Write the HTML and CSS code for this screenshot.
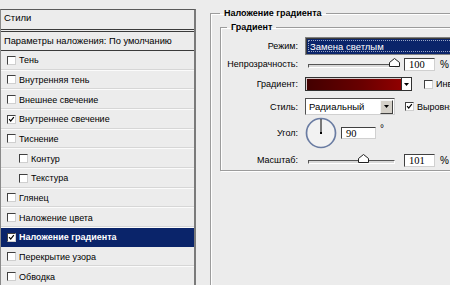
FILE: index.html
```html
<!DOCTYPE html>
<html lang="ru">
  <head>
    <meta charset="UTF-8" />
    <title>Стиль слоя</title>
    <link rel="stylesheet" href="styles.css">
  </head>
  <body>
    <div class="styles-panel">
      <div class="panel-head">Стили</div>
      <div class="panel-defaults">Параметры наложения: По умолчанию</div>
      <ul class="effects">
        <li><span class="check"></span>Тень</li>
        <li><span class="check"></span>Внутренняя тень</li>
        <li><span class="check"></span>Внешнее свечение</li>
        <li><span class="check checked"><svg viewBox="0 0 9 9"><polyline points="1.5,4 3.5,6.5 7.5,1.5" /></svg></span>Внутреннее свечение</li>
        <li><span class="check"></span>Тиснение</li>
        <li class="sub"><span class="check"></span>Контур</li>
        <li class="sub"><span class="check"></span>Текстура</li>
        <li><span class="check"></span>Глянец</li>
        <li><span class="check"></span>Наложение цвета</li>
        <li class="active"><span class="check checked"><svg viewBox="0 0 9 9"><polyline points="1.5,4 3.5,6.5 7.5,1.5" /></svg></span>Наложение градиента</li>
        <li><span class="check"></span>Перекрытие узора</li>
        <li><span class="check"></span>Обводка</li>
      </ul>
    </div>

    <div class="options">
      <fieldset class="group outer">
        <legend>Наложение градиента</legend>
        <fieldset class="group inner">
          <legend>Градиент</legend>

          <div class="row row-mode">
            <span class="row-label">Режим:</span>
            <div class="mode-box"><span>Замена светлым</span></div>
          </div>

          <div class="row row-opacity">
            <span class="row-label">Непрозрачность:</span>
            <div class="slider">
              <svg class="thumb" style="left: 100%" viewBox="0 0 11 9"><polygon points="0.5,8.5 0.5,4.5 5.5,0.5 10.5,4.5 10.5,8.5" /></svg>
            </div>
            <div class="num-box">100</div>
            <span class="unit">%</span>
          </div>

          <div class="row row-gradient">
            <span class="row-label">Градиент:</span>
            <div class="gradient-box"></div>
            <div class="arrow-btn light"><svg viewBox="0 0 7 4"><polygon points="0,0 7,0 3.5,4" /></svg></div>
            <span class="check"></span>
            <span class="opt-text">Инверсия</span>
          </div>

          <div class="row row-style">
            <span class="row-label">Стиль:</span>
            <div class="style-box">
              <span>Радиальный</span>
              <div class="arrow-btn"><svg viewBox="0 0 7 4"><polygon points="0,0 7,0 3.5,4" /></svg></div>
            </div>
            <span class="check checked"><svg viewBox="0 0 9 9"><polyline points="1.5,4 3.5,6.5 7.5,1.5" /></svg></span>
            <span class="opt-text">Выровнять</span>
          </div>

          <div class="row row-angle">
            <span class="row-label">Угол:</span>
            <svg class="dial" viewBox="0 0 32 32">
              <circle cx="16" cy="16" r="14.5" />
              <line x1="16" y1="16" x2="16" y2="2" />
              <rect x="15" y="15" width="2" height="2" />
            </svg>
            <div class="num-box angle-box">90</div>
            <span class="degree">°</span>
          </div>

          <div class="row row-scale">
            <span class="row-label">Масштаб:</span>
            <div class="slider">
              <svg class="thumb" style="left: 64%" viewBox="0 0 11 9"><polygon points="0.5,8.5 0.5,4.5 5.5,0.5 10.5,4.5 10.5,8.5" /></svg>
            </div>
            <div class="num-box">101</div>
            <span class="unit">%</span>
          </div>
        </fieldset>
      </fieldset>
    </div>
  </body>
</html>
```

FILE: styles.css
```css
* {
  box-sizing: border-box;
}

body {
  margin: 0;
  height: 285px;
  overflow: hidden;
  display: flex;
  align-items: flex-start;
  background: #ececec;
  font-family: "Liberation Sans", Arial, sans-serif;
  font-size: 9px;
  color: #000;
}

/* left list of styles */
.styles-panel {
  width: 196px;
  flex: none;
  margin-top: 9px;
  height: 300px;
  border-top: 1px solid #5a5a5a;
  border-left: 1px solid #8a8a8a;
  border-right: 2px solid #7a7a7a;
  background: #ececec;
}

.panel-head {
  height: 22px;
  line-height: 15px;
  padding-left: 3px;
  font-size: 9.5px;
  border-bottom: 3px double #3a3a3a;
}

.panel-defaults {
  height: 19px;
  line-height: 19px;
  padding-left: 3px;
  font-size: 9.3px;
  border-bottom: 1px solid #3a3a3a;
}

.effects {
  list-style: none;
  margin: 0;
  padding: 0;
}

.effects li {
  display: flex;
  align-items: center;
  height: 19.67px;
  padding-left: 6px;
  border-bottom: 1px solid #fbfbfb;
  box-shadow: inset 0 -1px 0 #d6d6d6;
}

.effects li .check {
  margin-right: 3px;
}

.effects li.sub {
  padding-left: 18px;
}

.effects li.active {
  background: #0a246a;
  color: #fff;
  font-weight: bold;
  border-bottom-color: #ececec;
  box-shadow: none;
}

.check {
  display: inline-block;
  flex: none;
  width: 9px;
  height: 9px;
  background: #fff;
  border-top: 1px solid #404040;
  border-left: 1px solid #404040;
  border-right: 1px solid #cfcfcf;
  border-bottom: 1px solid #cfcfcf;
}

.check svg {
  display: block;
  width: 7px;
  height: 7px;
}

.check polyline {
  fill: none;
  stroke: #000;
  stroke-width: 1.6;
}

/* right side */
.options {
  margin-left: 14px;
  margin-top: 7px;
  flex: none;
}

.group {
  margin: 0;
  min-width: 0;
  border: 1px solid #9c9c9c;
  box-shadow: 1px 1px 0 #fff, inset 1px 1px 0 #fff;
}

.group legend {
  padding: 0 4px;
  font-weight: bold;
  line-height: 12px;
}

.outer {
  width: 320px;
  height: 310px;
  padding: 2px 0 0 9px;
  border-right: none;
}

.inner {
  width: 300px;
  padding: 4px 0 2px 6px;
  border-right: none;
}

.row {
  display: flex;
  align-items: center;
}

.row-label {
  width: 71px;
  margin-right: 7px;
  text-align: right;
  flex: none;
}

.row-mode { height: 18px; }
.row-opacity { height: 16px; margin-top: 1px; }
.row-gradient { height: 18px; margin-top: 3px; }
.row-style { height: 19px; margin-top: 4px; }
.row-angle { height: 32px; margin-top: 1px; }
.row-scale { height: 16px; margin-top: 3px; }

.mode-box {
  width: 200px;
  height: 18px;
  padding: 2px;
  background: #0a246a;
  border: 1px solid #7f7f7f;
  box-shadow: inset 1px 1px 0 #3c3c3c;
}

.mode-box span {
  display: block;
  height: 100%;
  line-height: 12px;
  padding-left: 1px;
  color: #fff;
  font-size: 9.5px;
  border: 1px dotted #9aa6c4;
  border-right: none;
}

.slider {
  position: relative;
  width: 87px;
  height: 4px;
  margin-left: 3px;
  margin-top: 4px;
  border-top: 1px solid #555;
  border-left: 1px solid #555;
  border-bottom: 1px solid #fff;
  border-right: 1px solid #fff;
  background: #d8d8d8;
  flex: none;
}

.thumb {
  position: absolute;
  top: -7px;
  width: 11px;
  height: 9px;
  margin-left: -5px;
}

.thumb polygon {
  fill: #fff;
  stroke: #222;
  stroke-width: 1;
}

.num-box {
  width: 31px;
  height: 13px;
  margin-left: 9px;
  padding-left: 4px;
  background: #fff;
  border-top: 1px solid #404040;
  border-left: 1px solid #404040;
  border-right: 1px solid #d0d0d0;
  border-bottom: 1px solid #d0d0d0;
  font-family: "Liberation Serif", "Times New Roman", serif;
  font-size: 10.5px;
  line-height: 11px;
  flex: none;
}

.unit {
  margin-left: 5px;
  font-size: 10px;
}

.gradient-box {
  width: 97px;
  height: 14px;
  border: 1px solid #303030;
  background: linear-gradient(to right, #420000, #6a0000 60%, #900000);
  box-shadow: inset 1px 1px 0 #d8c8c8;
  flex: none;
}

.arrow-btn {
  width: 10px;
  height: 14px;
  display: flex;
  align-items: center;
  justify-content: center;
  border: 1px solid #303030;
  border-left: none;
  background: #d4d0c8;
  flex: none;
}

.arrow-btn.light {
  background: #fff;
}

.arrow-btn svg {
  width: 5px;
  height: 3px;
  display: block;
}

.row-gradient .check {
  margin-left: 12px;
}

.opt-text {
  margin-left: 3px;
  white-space: nowrap;
}

.style-box {
  width: 90px;
  height: 17px;
  display: flex;
  align-items: center;
  justify-content: space-between;
  padding: 1px 1px 1px 3px;
  background: #fff;
  border-top: 1px solid #505050;
  border-left: 1px solid #505050;
  border-right: 1px solid #d0d0d0;
  border-bottom: 1px solid #d0d0d0;
  font-size: 9.5px;
  flex: none;
}

.style-box .arrow-btn {
  width: 13px;
  height: 14px;
  border: 1px solid;
  border-color: #f4f4f4 #404040 #404040 #f4f4f4;
}

.row-style .check {
  margin-left: 10px;
}

.dial {
  width: 32px;
  height: 32px;
  flex: none;
}

.dial circle {
  fill: #f2f2f2;
  stroke: #6a7ca2;
  stroke-width: 1.7;
}

.dial line {
  stroke: #000;
  stroke-width: 1;
}

.angle-box {
  width: 35px;
  height: 12px;
  margin-left: 4px;
}

.degree {
  align-self: flex-start;
  margin-top: 6px;
  margin-left: 4px;
  font-size: 10px;
}
```
